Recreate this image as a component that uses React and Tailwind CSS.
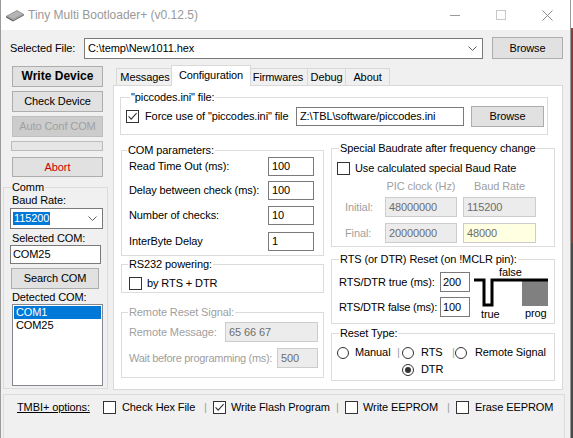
import React from 'react';

function Check({ checked }) {
  return (
    <span className="inline-flex w-[13px] h-[13px] shrink-0 items-center justify-center border border-[#333333] bg-white">
      {checked ? (
        <svg width="11" height="11" viewBox="0 0 11 11">
          <path d="M1.6 5.4 L4.2 8.2 L9.6 2.2" fill="none" stroke="#333333" strokeWidth="1.1" />
        </svg>
      ) : null}
    </span>
  );
}

function Radio({ checked }) {
  return (
    <span className="inline-flex w-[12px] h-[12px] shrink-0 items-center justify-center rounded-full border border-[#333333] bg-white">
      {checked ? <span className="w-[6px] h-[6px] rounded-full bg-[#333333]" /> : null}
    </span>
  );
}

function Chevron() {
  return (
    <svg width="9" height="5" viewBox="0 0 9 5">
      <path d="M0.5 0.5 L4.5 4.5 L8.5 0.5" fill="none" stroke="#606060" strokeWidth="1" />
    </svg>
  );
}

function Btn({ children, className }) {
  return (
    <div className={'flex items-center justify-center border border-[#adadad] bg-[#e1e1e1] ' + className}>{children}</div>
  );
}

function Box({ children, className }) {
  return <div className={'flex items-center border border-[#7a7a7a] bg-white pl-[3px] ' + className}>{children}</div>;
}

function DBox({ children, className }) {
  return (
    <div className={'flex items-center border border-[#cccccc] pl-[3px] text-[#6d6d6d] ' + className}>{children}</div>
  );
}

function Sep() {
  return <span className="text-[#a0a0a0]">|</span>;
}

export default function App() {
  return (
    <div className="w-[573px] h-[438px] flex overflow-hidden whitespace-nowrap tracking-[-0.1px] bg-[#f0f0f0] font-['Liberation_Sans',Arial,sans-serif] text-[11px] leading-[13px] text-black">
      <div className="w-[571px] h-full shrink-0 flex flex-col border-l border-r border-[#9a9a9a] bg-[#f0f0f0]">
        {/* Title bar */}
        <div className="h-[30px] shrink-0 flex items-center bg-white">
          <svg className="ml-[4px]" width="20" height="14" viewBox="0 0 20 14">
            <polygon points="1,8 12,2 19,6 8,12" fill="#9c9c9c" />
            <polygon points="3,8 12,3.2 17,6 8,10.8" fill="#b5b5b5" />
            <polygon points="1,8 8,12 8,13.6 1,9.6" fill="#5e5e5e" />
            <polygon points="8,12 19,6 19,7.6 8,13.6" fill="#777777" />
          </svg>
          <span className="ml-[3px] text-[12px] tracking-normal text-[#999999]">Tiny Multi Bootloader+ (v0.12.5)</span>
          <div className="ml-auto flex h-full">
            <div className="w-[46px] flex items-center justify-center">
              <span className="w-[10px] h-[1px] bg-[#9a9a9a]" />
            </div>
            <div className="w-[46px] flex items-center justify-center">
              <span className="w-[10px] h-[10px] border border-[#c8c8c8]" />
            </div>
            <div className="w-[46px] flex items-center justify-center">
              <svg width="11" height="11" viewBox="0 0 11 11">
                <path d="M0.5 0.5 L10.5 10.5 M10.5 0.5 L0.5 10.5" stroke="#8a8a8a" strokeWidth="1" />
              </svg>
            </div>
          </div>
        </div>

        {/* Selected file row */}
        <div className="mt-[7px] h-[22px] flex items-center">
          <span className="w-[83px] pl-[9px]">Selected File:</span>
          <Box className="w-[399px] h-[21px]">
            <span>C:\temp\New1011.hex</span>
            <span className="ml-auto mr-[5px] flex">
              <Chevron />
            </span>
          </Box>
          <Btn className="ml-[9px] w-[71px] h-[22px]">Browse</Btn>
        </div>

        {/* Main */}
        <div className="mt-[6px] flex h-[325px]">
          {/* Left column */}
          <div className="ml-[2px] w-[105px] flex flex-col">
            <Btn className="mt-[1px] ml-[9px] w-[91px] h-[21px] font-bold text-[12px] tracking-normal">Write Device</Btn>
            <Btn className="mt-[4px] ml-[9px] w-[91px] h-[21px]">Check Device</Btn>
            <div className="mt-[4px] ml-[9px] w-[91px] h-[21px] flex items-center justify-center border border-[#bfbfbf] bg-[#cccccc] text-[#a0a0a0]">
              Auto Conf COM
            </div>
            <div className="mt-[4px] ml-[8px] w-[92px] h-[10px] border border-[#bcbcbc] bg-[#e6e6e6]" />
            <Btn className="mt-[6px] ml-[9px] w-[91px] h-[20px] text-[#cc0000]">Abort</Btn>
            <fieldset className="mt-[4px] h-[208px] border border-[#dcdcdc]">
              <legend className="ml-[7px] px-[1px] leading-[12px]">Comm</legend>
              <div className="mt-[1px] h-[13px] pl-[8px]">Baud Rate:</div>
              <Box className="mt-[1px] ml-[6px] w-[93px] h-[21px] !pl-[2px]">
                <span className="bg-[#0078d7] text-white px-[1px]">115200</span>
                <span className="ml-auto mr-[5px] flex">
                  <Chevron />
                </span>
              </Box>
              <div className="mt-[3px] h-[13px] pl-[8px]">Selected COM:</div>
              <Box className="ml-[6px] w-[91px] h-[19px] !pl-[2px]">COM25</Box>
              <Btn className="mt-[4px] ml-[7px] w-[88px] h-[21px]">Search COM</Btn>
              <div className="mt-[2px] h-[13px] pl-[8px]">Detected COM:</div>
              <div className="ml-[8px] w-[91px] h-[82px] border border-[#828790] bg-white pt-[1px] pl-[1px] pr-[1px]">
                <div className="h-[13px] bg-[#0078d7] text-white pl-[2px]">COM1</div>
                <div className="h-[13px] pl-[2px]">COM25</div>
              </div>
            </fieldset>
          </div>

          {/* Tab control */}
          <div className="ml-[5px] w-[450px] flex flex-col">
            <div className="h-[20px] flex items-end pl-[3px]">
              <div className="w-[57px] h-[17px] flex items-center justify-center border-t border-l border-[#d9d9d9] bg-[#f0f0f0]">Messages</div>
              <div className="relative z-10 -mx-[2px] -mb-[1px] w-[80px] h-[21px] flex items-start pt-[3px] justify-center border-t border-l border-r border-[#d9d9d9] bg-white">
                Configuration
              </div>
              <div className="w-[58px] h-[17px] flex items-center justify-center border-t border-[#d9d9d9] bg-[#f0f0f0]">Firmwares</div>
              <div className="w-[38px] h-[17px] flex items-center justify-center border-t border-l border-[#d9d9d9] bg-[#f0f0f0]">Debug</div>
              <div className="w-[45px] h-[17px] flex items-center justify-center border-t border-l border-r border-[#d9d9d9] bg-[#f0f0f0]">About</div>
            </div>
            <div className="h-[305px] border border-[#d9d9d9] bg-white flex flex-col">
              {/* piccodes */}
              <fieldset className="mt-[5px] ml-[6px] w-[428px] h-[44px] border border-[#dcdcdc]">
                <legend className="ml-[9px] px-[1px] leading-[12px]">"piccodes.ini" file:</legend>
                <div className="mt-[3px] h-[21px] flex items-center pl-[5px]">
                  <Check checked />
                  <span className="ml-[6px]">Force use of "piccodes.ini" file</span>
                  <Box className="ml-auto w-[168px] h-[19px]">Z:\TBL\software/piccodes.ini</Box>
                  <Btn className="ml-[7px] mr-[3px] w-[73px] h-[21px]">Browse</Btn>
                </div>
              </fieldset>

              <div className="flex">
                {/* left column */}
                <div className="ml-[7px] w-[203px] flex flex-col">
                  <fieldset className="mt-[9px] h-[112px] border border-[#dcdcdc]">
                    <legend className="ml-[5px] px-[1px] leading-[12px]">COM parameters:</legend>
                    <div className="mt-[1px] h-[19px] flex items-center pl-[7px]">
                      <span className="w-[139px] shrink-0">Read Time Out (ms):</span>
                      <Box className="w-[46px] h-[19px]">100</Box>
                    </div>
                    <div className="mt-[5px] h-[19px] flex items-center pl-[7px]">
                      <span className="w-[139px] shrink-0">Delay between check (ms):</span>
                      <Box className="w-[46px] h-[19px]">100</Box>
                    </div>
                    <div className="mt-[6px] h-[19px] flex items-center pl-[7px]">
                      <span className="w-[139px] shrink-0">Number of checks:</span>
                      <Box className="w-[46px] h-[19px]">10</Box>
                    </div>
                    <div className="mt-[7px] h-[19px] flex items-center pl-[7px]">
                      <span className="w-[139px] shrink-0">InterByte Delay</span>
                      <Box className="w-[46px] h-[19px]">1</Box>
                    </div>
                  </fieldset>
                  <fieldset className="mt-[2px] h-[35px] border border-[#dcdcdc]">
                    <legend className="ml-[6px] px-[1px] leading-[12px]">RS232 powering:</legend>
                    <div className="mt-[7px] h-[13px] flex items-center pl-[7px]">
                      <Check />
                      <span className="ml-[5px]">by RTS + DTR</span>
                    </div>
                  </fieldset>
                  <fieldset className="mt-[13px] h-[72px] border border-[#dcdcdc] text-[#a0a0a0]">
                    <legend className="ml-[6px] px-[1px] leading-[12px]">Remote Reset Signal:</legend>
                    <div className="mt-[4px] h-[20px] flex items-center pl-[7px]">
                      <span className="w-[96px] shrink-0">Remote Message:</span>
                      <DBox className="w-[93px] h-[20px] bg-[#ececec]">65 66 67</DBox>
                    </div>
                    <div className="mt-[6px] h-[20px] flex items-center pl-[7px]">
                      <span className="w-[148px] shrink-0 tracking-[-0.3px]">Wait before programming (ms):</span>
                      <DBox className="w-[41px] h-[20px] bg-[#ececec]">500</DBox>
                    </div>
                  </fieldset>
                </div>

                {/* right column */}
                <div className="ml-[7px] w-[224px] flex flex-col">
                  <fieldset className="mt-[7px] h-[105px] border border-[#dcdcdc]">
                    <legend className="ml-[7px] px-[1px] leading-[12px]">Special Baudrate after frequency change</legend>
                    <div className="mt-[8px] h-[13px] flex items-center pl-[5px]">
                      <Check />
                      <span className="ml-[5px]">Use calculated special Baud Rate</span>
                    </div>
                    <div className="mt-[5px] h-[13px] flex items-center pl-[53px] text-[#a0a0a0]">
                      <span className="w-[72px] text-center">PIC clock (Hz)</span>
                      <span className="ml-[6px] w-[73px] text-center">Baud Rate</span>
                    </div>
                    <div className="mt-[4px] h-[20px] flex items-center pl-[13px]">
                      <span className="w-[40px] text-[#a0a0a0]">Initial:</span>
                      <DBox className="w-[72px] h-[20px] bg-[#ececec]">48000000</DBox>
                      <DBox className="ml-[6px] w-[73px] h-[20px] bg-[#ececec]">115200</DBox>
                    </div>
                    <div className="mt-[6px] h-[20px] flex items-center pl-[13px]">
                      <span className="w-[40px] text-[#a0a0a0]">Final:</span>
                      <DBox className="w-[72px] h-[20px] bg-[#ececec]">20000000</DBox>
                      <DBox className="ml-[6px] w-[73px] h-[20px] bg-[#ffffe1]">48000</DBox>
                    </div>
                  </fieldset>
                  <fieldset className="mt-[6px] h-[71px] border border-[#dcdcdc]">
                    <legend className="ml-[7px] px-[1px] leading-[12px]">RTS (or DTR) Reset (on !MCLR pin):</legend>
                    <div className="flex">
                      <div className="w-[138px] pl-[7px] flex flex-col">
                        <div className="mt-[7px] h-[20px] flex items-center">
                          <span className="w-[101px] shrink-0">RTS/DTR true (ms):</span>
                          <Box className="w-[30px] h-[20px] !pl-[2px]">200</Box>
                        </div>
                        <div className="mt-[5px] h-[20px] flex items-center">
                          <span className="w-[101px] shrink-0 tracking-[-0.2px]">RTS/DTR false (ms):</span>
                          <Box className="w-[30px] h-[20px] !pl-[2px]">100</Box>
                        </div>
                      </div>
                      <svg className="ml-[2px]" width="80" height="57" viewBox="0 0 80 57">
                        <text x="27" y="11" fontFamily="Liberation Sans, Arial, sans-serif" fontSize="11" fill="#000">false</text>
                        <rect x="50" y="16" width="26" height="25" fill="#808080" />
                        <path d="M2 15 H12 V40 H20 V15 H76" fill="none" stroke="#000" strokeWidth="3" strokeLinejoin="miter" />
                        <text x="9" y="53" fontFamily="Liberation Sans, Arial, sans-serif" fontSize="11" fill="#000">true</text>
                        <text x="53" y="52" fontFamily="Liberation Sans, Arial, sans-serif" fontSize="11" fill="#000">prog</text>
                      </svg>
                    </div>
                  </fieldset>
                  <fieldset className="mt-[3px] h-[54px] border border-[#dcdcdc]">
                    <legend className="ml-[7px] px-[1px] leading-[12px]">Reset Type:</legend>
                    <div className="mt-[7px] h-[13px] flex items-center pl-[5px]">
                      <span className="w-[60px] flex items-center">
                        <Radio />
                        <span className="ml-[6px]">Manual</span>
                      </span>
                      <span className="w-[5px] flex">
                        <Sep />
                      </span>
                      <span className="w-[50px] flex items-center">
                        <Radio />
                        <span className="ml-[7px]">RTS</span>
                      </span>
                      <span className="w-[3px] flex">
                        <Sep />
                      </span>
                      <span className="flex items-center">
                        <Radio />
                        <span className="ml-[8px]">Remote Signal</span>
                      </span>
                    </div>
                    <div className="mt-[4px] h-[13px] flex items-center pl-[70px]">
                      <Radio checked />
                      <span className="ml-[7px]">DTR</span>
                    </div>
                  </fieldset>
                </div>
              </div>
            </div>
          </div>
        </div>

        {/* Bottom options */}
        <div className="mt-[4px] ml-[2px] w-[562px] h-[60px] shrink-0 border border-[#dcdcdc]">
          <div className="mt-[6px] h-[13px] flex items-center pl-[13px]">
            <span className="w-[86px] underline">TMBI+ options:</span>
            <span className="w-[101px] flex items-center">
              <Check />
              <span className="ml-[6px]">Check Hex File</span>
            </span>
            <span className="w-[9px] flex">
              <Sep />
            </span>
            <span className="w-[123px] flex items-center">
              <Check checked />
              <span className="ml-[5px]">Write Flash Program</span>
            </span>
            <span className="w-[9px] flex">
              <Sep />
            </span>
            <span className="w-[102px] flex items-center">
              <Check />
              <span className="ml-[5px]">Write EEPROM</span>
            </span>
            <span className="w-[9px] flex">
              <Sep />
            </span>
            <span className="flex items-center">
              <Check />
              <span className="ml-[6px]">Erase EEPROM</span>
            </span>
          </div>
        </div>
      </div>
      <div className="w-[2px] h-full flex flex-col">
        <div className="h-[28px] bg-white" />
        <div className="h-[215px] bg-[#8f3b3b]" />
        <div className="flex-1 bg-[#4a4a4a]" />
      </div>
    </div>
  );
}
